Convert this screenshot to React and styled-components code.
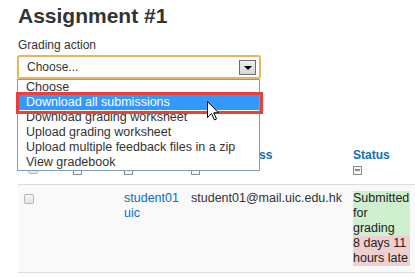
import React from 'react';
import styled, { createGlobalStyle } from 'styled-components';

const Global = createGlobalStyle`
  html, body { margin: 0; padding: 0; background: #fff; overflow: hidden; }
  body { font-family: "Liberation Sans", Arial, sans-serif; color: #333; }
`;

const Page = styled.div`
  box-sizing: border-box;
  width: 415px;
  padding: 3px 0 0 18px;
`;

const Title = styled.h2`
  margin: 0;
  font-size: 21px;
  line-height: 25px;
  font-weight: bold;
  color: #333;
`;

const Label = styled.div`
  margin-top: 10px;
  font-size: 12px;
  line-height: 15px;
  color: #333;
`;

const SelectWrap = styled.div`
  position: relative;
  width: 244px;
  margin: 2px 0 0 -1px;
`;

const SelectBox = styled.div`
  box-sizing: border-box;
  height: 24px;
  border: 2px solid #e9b45c;
  border-radius: 3px;
  display: flex;
  align-items: center;
  justify-content: space-between;
  padding: 0 3px 0 8px;
  font-size: 12px;
  color: #333;
  background: #fff;
`;

const ArrowButton = styled.span`
  box-sizing: border-box;
  width: 17px;
  height: 15px;
  border: 1px solid #6f6f6f;
  background: linear-gradient(#f0f0f0, #d6d6d6);
  display: flex;
  align-items: center;
  justify-content: center;
  padding-top: 2px;
  &::after {
    content: "";
    border-left: 4px solid transparent;
    border-right: 4px solid transparent;
    border-top: 4px solid #000;
  }
`;

const List = styled.ul`
  position: absolute;
  top: 100%;
  left: 0;
  z-index: 2;
  box-sizing: border-box;
  width: 243px;
  margin: 0;
  padding: 0;
  list-style: none;
  background: #fff;
  border: 1px solid #7f9db9;
`;

const Option = styled.li`
  height: 15px;
  line-height: 15px;
  font-size: 12.5px;
  padding-left: 8px;
  white-space: nowrap;
  color: ${p => (p.$active ? '#fff' : '#333')};
  background: ${p => (p.$active ? '#3399ff' : 'transparent')};
`;

const Highlight = styled.div`
  position: absolute;
  left: -1px;
  top: 37px;
  z-index: 3;
  box-sizing: border-box;
  width: 247px;
  height: 22px;
  border: 3px solid #e8413c;
`;

const Cursor = styled.svg`
  position: absolute;
  left: 190px;
  top: 46px;
  z-index: 4;
`;

const Table = styled.table`
  margin-top: 63px;
  width: 397px;
  table-layout: fixed;
  border-collapse: separate;
  border-spacing: 0;
`;

const Col = styled.col`
  width: ${p => p.$w}px;
`;

const Th = styled.th`
  padding: 6px 5px;
  vertical-align: bottom;
  text-align: left;
  font-size: 12px;
  line-height: 15px;
  font-weight: bold;
  color: #0a6ebd;
  border-bottom: 1px solid #ddd;
`;

const HeadText = styled.div`
  height: 15px;
  white-space: nowrap;
`;

const Td = styled.td`
  padding: 6px 5px;
  vertical-align: top;
  font-size: 12.5px;
  line-height: 15px;
  color: #333;
  background: #f9f9f9;
  border-bottom: 1px solid #ddd;
`;

const IconLine = styled.div`
  height: 15px;
  padding-top: ${p => p.$offset ?? 3}px;
  box-sizing: border-box;
`;

const Check = styled.span`
  display: block;
  box-sizing: border-box;
  width: 10px;
  height: 10px;
  margin: ${p => p.$m || '0'};
  border: 1px solid #b8b8b8;
  border-radius: 2px;
  background: linear-gradient(#f6f6f6, #e4e4e4);
`;

const NameLink = styled.a`
  color: #0a6ebd;
  text-decoration: none;
`;

const StatusBox = styled.div`
  background: ${p => (p.$late ? '#efcfcf' : '#cfefcf')};
  color: #222;
`;

const MinusIcon = () => (
  <svg width="9" height="9" viewBox="0 0 9 9" style={{ display: 'block' }}>
    <rect x="0.5" y="0.5" width="8" height="8" fill="#f7f7f7" stroke="#8e8e8e" />
    <rect x="2" y="3" width="5" height="2" fill="#8e8e8e" />
  </svg>
);

const options = [
  'Choose',
  'Download all submissions',
  'Download grading worksheet',
  'Upload grading worksheet',
  'Upload multiple feedback files in a zip',
  'View gradebook',
];

export default function App() {
  return (
    <>
      <Global />
      <Page>
        <Title>Assignment #1</Title>
        <Label>Grading action</Label>
        <SelectWrap>
          <SelectBox>
            <span>Choose...</span>
            <ArrowButton />
          </SelectBox>
          <List>
            {options.map((o, i) => (
              <Option key={o} $active={i === 1}>{o}</Option>
            ))}
          </List>
          <Highlight />
          <Cursor width="13" height="20" viewBox="0 0 13 20">
            <path d="M0.5 0.5 L0.5 16.5 L4.5 12.5 L7.5 19 L9.5 18 L6.8 11.8 L11.5 11.8 Z" fill="#fff" stroke="#000" strokeWidth="1" strokeLinejoin="miter" />
          </Cursor>
        </SelectWrap>
        <Table>
          <colgroup>
            <Col $w={50} />
            <Col $w={51} />
            <Col $w={67} />
            <Col $w={162} />
            <Col $w={67} />
          </colgroup>
          <thead>
            <tr>
              <Th>
                <HeadText />
                <IconLine $offset={1}><Check $m="0 0 0 5px" /></IconLine>
              </Th>
              <Th>
                <HeadText />
                <IconLine><MinusIcon /></IconLine>
              </Th>
              <Th>
                <HeadText />
                <IconLine><MinusIcon /></IconLine>
              </Th>
              <Th>
                <HeadText>Email address</HeadText>
                <IconLine><MinusIcon /></IconLine>
              </Th>
              <Th>
                <HeadText>Status</HeadText>
                <IconLine><MinusIcon /></IconLine>
              </Th>
            </tr>
          </thead>
          <tbody>
            <tr>
              <Td><Check $m="3px 0 0 1px" /></Td>
              <Td />
              <Td><NameLink href="#">student01 uic</NameLink></Td>
              <Td>student01@mail.uic.edu.hk</Td>
              <Td>
                <StatusBox>Submitted for grading</StatusBox>
                <StatusBox $late>8 days 11 hours late</StatusBox>
              </Td>
            </tr>
          </tbody>
        </Table>
      </Page>
    </>
  );
}
